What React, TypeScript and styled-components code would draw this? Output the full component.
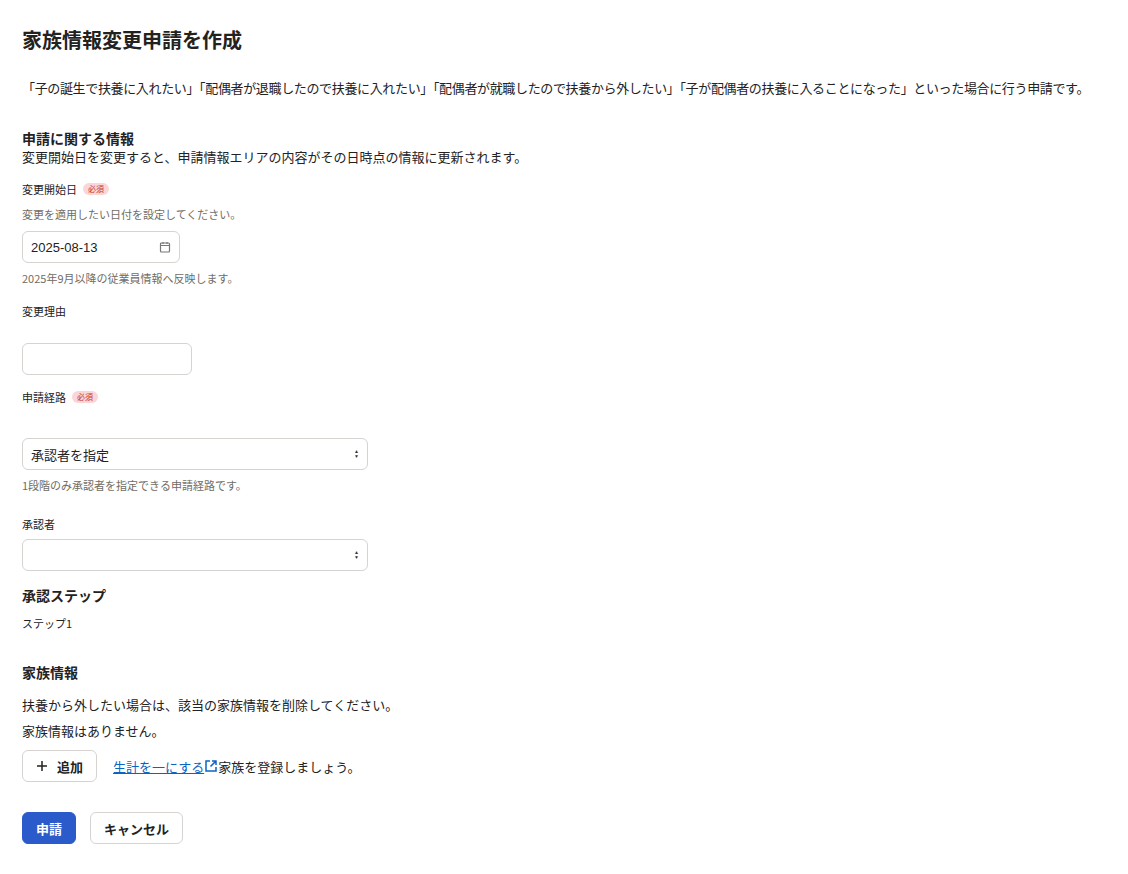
import React from 'react';
import styled, { createGlobalStyle } from 'styled-components';

const Global = createGlobalStyle`
  body {
    margin: 0;
    background: #fff;
    color: #23221e;
    font-family: "Noto Sans CJK JP", "Noto Sans", sans-serif;
  }
`;

const Page = styled.div`
  padding: 26px 22px 20px;
`;

const Title = styled.h1`
  font-size: 20px;
  font-weight: 700;
  margin: 0 0 24px;
  line-height: 28px;
`;

const Lead = styled.p`
  font-size: 13px;
  letter-spacing: -0.35px;
  white-space: nowrap;
  margin: 0 0 30px;
  line-height: 20px;
`;

const SectionTitle = styled.h2<{ $mt?: number }>`
  font-size: 14px;
  font-weight: 700;
  margin: ${p => p.$mt ?? 0}px 0 0;
  line-height: 20px;
`;

const Text = styled.p<{ $mt?: number; $size?: number; $muted?: boolean }>`
  font-size: ${p => p.$size ?? 13}px;
  color: ${p => (p.$muted ? '#706d65' : '#23221e')};
  margin: ${p => p.$mt ?? 0}px 0 0;
  line-height: 18px;
`;

const Label = styled.div<{ $mt: number }>`
  display: flex;
  align-items: center;
  gap: 6px;
  font-size: 11px;
  margin-top: ${p => p.$mt}px;
  line-height: 18px;
`;

const Badge = styled.span`
  background: #fbd5d8;
  color: #c0392b;
  font-size: 8px;
  border-radius: 8px;
  padding: 0 5px;
  line-height: 12px;
`;

const Field = styled.div<{ $w: number; $mt: number }>`
  box-sizing: border-box;
  width: ${p => p.$w}px;
  height: 32px;
  margin-top: ${p => p.$mt}px;
  border: 1px solid #d6d3d0;
  border-radius: 6px;
  display: flex;
  align-items: center;
  justify-content: space-between;
  padding: 0 8px;
  font-size: 13px;
  font-family: "Liberation Sans", "Noto Sans CJK JP", sans-serif;
`;

const Arrows = styled.span`
  display: flex;
  flex-direction: column;
  font-size: 5px;
  line-height: 5px;
  color: #333;
`;

const Row = styled.div`
  display: flex;
  align-items: center;
  gap: 16px;
  margin-top: 10px;
`;

const Button = styled.button<{ $primary?: boolean }>`
  height: 32px;
  padding: 0 13px;
  border-radius: 6px;
  font-family: inherit;
  font-size: 13px;
  font-weight: 700;
  display: flex;
  align-items: center;
  gap: 9px;
  background: ${p => (p.$primary ? '#2b5bcb' : '#fff')};
  color: ${p => (p.$primary ? '#fff' : '#23221e')};
  border: 1px solid ${p => (p.$primary ? '#2b5bcb' : '#d6d3d0')};
`;

const LinkText = styled.span`
  font-size: 13px;
  display: flex;
  align-items: center;
  a {
    color: #0b64c2;
    text-decoration: underline;
  }
`;

const Footer = styled.div`
  display: flex;
  gap: 14px;
  margin-top: 30px;
`;

const Calendar = () => (
  <svg width="12" height="12" viewBox="0 0 12 12" fill="none" stroke="#777" strokeWidth="1.2">
    <rect x="1.5" y="2" width="9" height="9" rx="1" />
    <path d="M1.5 4.5h9M4 1v2M8 1v2" />
  </svg>
);

const External = () => (
  <svg width="14" height="14" viewBox="0 0 14 14" fill="none" stroke="#0b64c2" strokeWidth="1.5">
    <path d="M6 2H2v10h10V8" />
    <path d="M8 2h4v4M12 2L6.5 7.5" />
  </svg>
);

export default function App() {
  return (
    <Page>
      <Global />
      <Title>家族情報変更申請を作成</Title>
      <Lead>
        「子の誕生で扶養に入れたい」「配偶者が退職したので扶養に入れたい」「配偶者が就職したので扶養から外したい」「子が配偶者の扶養に入ることになった」といった場合に行う申請です。
      </Lead>
      <SectionTitle>申請に関する情報</SectionTitle>
      <Text>変更開始日を変更すると、申請情報エリアの内容がその日時点の情報に更新されます。</Text>

      <Label $mt={14}>変更開始日<Badge>必須</Badge></Label>
      <Text $size={11} $muted $mt={7}>変更を適用したい日付を設定してください。</Text>
      <Field $w={158} $mt={8}>2025-08-13<Calendar /></Field>
      <Text $size={11} $muted $mt={6}>2025年9月以降の従業員情報へ反映します。</Text>

      <Label $mt={15}>変更理由</Label>
      <Field $w={170} $mt={23} />

      <Label $mt={13}>申請経路<Badge>必須</Badge></Label>
      <Field $w={346} $mt={32}>承認者を指定<Arrows><span>▲</span><span>▼</span></Arrows></Field>
      <Text $size={11} $muted $mt={6}>1段階のみ承認者を指定できる申請経路です。</Text>

      <Label $mt={21}>承認者</Label>
      <Field $w={346} $mt={6}><span /><Arrows><span>▲</span><span>▼</span></Arrows></Field>

      <SectionTitle $mt={14}>承認ステップ</SectionTitle>
      <Text $size={11} $mt={9}>ステップ1</Text>

      <SectionTitle $mt={30}>家族情報</SectionTitle>
      <Text $mt={14}>扶養から外したい場合は、該当の家族情報を削除してください。</Text>
      <Text $mt={8}>家族情報はありません。</Text>
      <Row>
        <Button>
          <svg width="12" height="12" viewBox="0 0 12 12" stroke="#23221e" strokeWidth="1.5">
            <path d="M6 1v10M1 6h10" />
          </svg>
          追加
        </Button>
        <LinkText>
          <a href="#">生計を一にする</a>
          <External />
          家族を登録しましょう。
        </LinkText>
      </Row>
      <Footer>
        <Button $primary>申請</Button>
        <Button>キャンセル</Button>
      </Footer>
    </Page>
  );
}
